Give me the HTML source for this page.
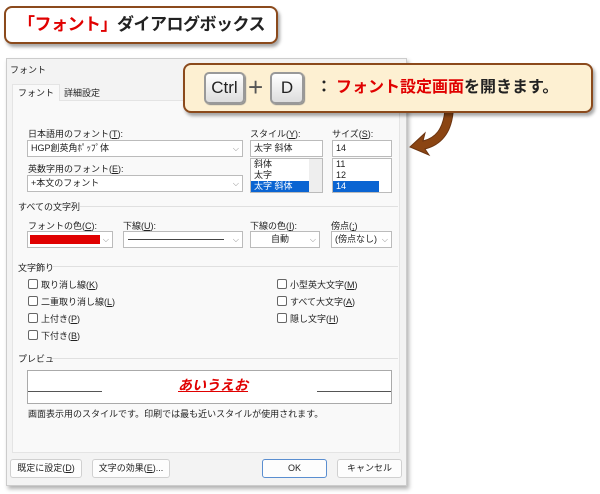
<!DOCTYPE html>
<html><head><meta charset="utf-8"><style>
*{box-sizing:border-box;margin:0;padding:0}
body{width:600px;height:494px;background:#fff;position:relative;overflow:hidden;font-family:"Liberation Sans","Noto Sans CJK JP",sans-serif;font-size:9px;color:#222}
.a{position:absolute;white-space:nowrap}
.title{left:4px;top:6px;width:274px;height:38px;border:2px solid #8b4a1c;border-radius:8px;background:#fff;box-shadow:2px 3px 3px rgba(0,0,0,.35);font-size:17px;font-weight:bold;line-height:34px;padding-left:12px;letter-spacing:-0.5px}
.dlg{left:6px;top:58px;width:401px;height:428px;background:#f3f3f3;border:1px solid #ccc;box-shadow:2px 3px 4px rgba(0,0,0,.3)}
.panel{left:12px;top:100px;width:388px;height:353px;background:#f9f9f9;border:1px solid #e4e4e4}
.box{position:absolute;background:#fff;border:1px solid #bbb;height:17px;line-height:15px;padding-left:3px;white-space:nowrap}
.dd{position:absolute;right:3px;top:0;color:#888;font-size:8px}
.sec{position:absolute;height:1px;background:#e0e0e0}
.cb{position:absolute;width:10px;height:10px;border:1px solid #666;border-radius:2px;background:#fff}
.btn{position:absolute;top:459px;height:19px;background:#fdfdfd;border:1px solid #d0d0d0;border-radius:3px;text-align:center;line-height:17px}
u{text-decoration:underline}
.key{position:absolute;top:72px;height:32px;border:2px solid #999;border-radius:5px;background:linear-gradient(#fff,#ddd);font-size:17px;text-align:center;line-height:28px;color:#222;box-shadow:1px 1px 1px #888}
</style></head><body>
<div class="a title"><span style="color:#e00000">「フォント」</span>ダイアログボックス</div>
<div class="a dlg"></div>
<div class="a" style="left:10px;top:63px">フォント</div>
<div class="a" style="left:12px;top:84px;width:48px;height:17px;background:#f9f9f9;border:1px solid #e4e4e4;border-bottom:none;text-align:center;line-height:17px;z-index:2">フォント</div>
<div class="a" style="left:64px;top:86px;line-height:15px">詳細設定</div>
<div class="a panel"></div>
<div class="a" style="left:28px;top:127px">日本語用のフォント(<u>T</u>):</div>
<div class="box" style="left:27px;top:140px;width:216px">HGP創英角ﾎﾟｯﾌﾟ体<span class="dd">⌵</span></div>
<div class="a" style="left:28px;top:162px">英数字用のフォント(<u>E</u>):</div>
<div class="box" style="left:27px;top:175px;width:216px">+本文のフォント<span class="dd">⌵</span></div>
<div class="a" style="left:250px;top:127px">スタイル(<u>Y</u>):</div>
<div class="box" style="left:250px;top:140px;width:73px">太字 斜体</div>
<div class="box" style="left:250px;top:158px;width:73px;height:35px;padding:0;line-height:11px"><div style="padding-left:3px">斜体</div><div style="padding-left:3px">太字</div><div style="background:#0a64d2;color:#fff;width:58px;padding-left:3px">太字 斜体</div><div class="a" style="left:58px;top:0;width:13px;height:33px;background:#eee"></div></div>
<div class="a" style="left:332px;top:127px">サイズ(<u>S</u>):</div>
<div class="box" style="left:332px;top:140px;width:60px">14</div>
<div class="box" style="left:332px;top:158px;width:60px;height:35px;padding:0;line-height:11px"><div style="padding-left:3px">11</div><div style="padding-left:3px">12</div><div style="background:#0a64d2;color:#fff;width:46px;padding-left:3px">14</div></div>
<div class="a" style="left:18px;top:200px">すべての文字列</div><div class="sec" style="left:80px;top:206px;width:318px"></div>
<div class="a" style="left:28px;top:219px">フォントの色(<u>C</u>):</div>
<div class="box" style="left:27px;top:231px;width:86px"><div class="a" style="left:2px;top:3px;width:70px;height:9px;background:#e00000"></div><span class="dd">⌵</span></div>
<div class="a" style="left:123px;top:219px">下線(<u>U</u>):</div>
<div class="box" style="left:123px;top:231px;width:120px"><div class="a" style="left:4px;top:7px;width:96px;height:1px;background:#444"></div><span class="dd">⌵</span></div>
<div class="a" style="left:250px;top:219px">下線の色(<u>I</u>):</div>
<div class="box" style="left:250px;top:231px;width:70px;padding-left:20px">自動<span class="dd">⌵</span></div>
<div class="a" style="left:331px;top:219px">傍点(<u>;</u>)</div>
<div class="box" style="left:331px;top:231px;width:61px">(傍点なし)<span class="dd">⌵</span></div>
<div class="a" style="left:18px;top:261px">文字飾り</div><div class="sec" style="left:52px;top:266px;width:346px"></div>
<div class="cb" style="left:28px;top:279px"></div><div class="a" style="left:41px;top:278px">取り消し線(<u>K</u>)</div>
<div class="cb" style="left:28px;top:296px"></div><div class="a" style="left:41px;top:295px">二重取り消し線(<u>L</u>)</div>
<div class="cb" style="left:28px;top:313px"></div><div class="a" style="left:41px;top:312px">上付き(<u>P</u>)</div>
<div class="cb" style="left:28px;top:330px"></div><div class="a" style="left:41px;top:329px">下付き(<u>B</u>)</div>
<div class="cb" style="left:277px;top:279px"></div><div class="a" style="left:290px;top:278px">小型英大文字(<u>M</u>)</div>
<div class="cb" style="left:277px;top:296px"></div><div class="a" style="left:290px;top:295px">すべて大文字(<u>A</u>)</div>
<div class="cb" style="left:277px;top:313px"></div><div class="a" style="left:290px;top:312px">隠し文字(<u>H</u>)</div>
<div class="a" style="left:18px;top:352px">プレビュー</div><div class="sec" style="left:52px;top:358px;width:346px"></div>
<div class="a" style="left:27px;top:370px;width:365px;height:34px;background:#fff;border:1px solid #aaa"></div>
<div class="a" style="left:28px;top:391px;width:74px;height:1px;background:#555"></div>
<div class="a" style="left:317px;top:391px;width:74px;height:1px;background:#555"></div>
<div class="a" style="left:178px;top:375px;font-size:14px;font-weight:bold;font-style:italic;color:#e00000;text-decoration:underline">あいうえお</div>
<div class="a" style="left:28px;top:407px">画面表示用のスタイルです。印刷では最も近いスタイルが使用されます。</div>
<div class="btn" style="left:10px;width:72px">既定に設定(<u>D</u>)</div>
<div class="btn" style="left:92px;width:78px">文字の効果(<u>E</u>)...</div>
<div class="btn" style="left:262px;width:65px;border:1px solid #5a8ed0">OK</div>
<div class="btn" style="left:337px;width:65px">キャンセル</div>
<svg class="a" style="left:405px;top:105px" width="50" height="55"><path d="M40 5 C38 25 30 33 18 36 L20 28 L5 42 L24 50 L20 44 C36 40 46 28 48 8 Z" fill="#8b4513" stroke="#6b3410" stroke-width="1"/></svg>
<div class="a" style="left:183px;top:63px;width:410px;height:50px;border:2px solid #8b4a1c;border-radius:8px;background:#fdf0d2;box-shadow:2px 3px 3px rgba(0,0,0,.35)"></div>
<div class="key" style="left:204px;width:41px">Ctrl</div>
<div class="a" style="left:248px;top:70px;font-size:26px;color:#555;line-height:34px">+</div>
<div class="key" style="left:270px;width:34px">D</div>
<div class="a" style="left:316px;top:77px;font-size:16px;font-weight:bold;line-height:22px">：</div>
<div class="a" style="left:336px;top:77px;font-size:16px;font-weight:bold;line-height:22px"><span style="color:#e00000">フォント設定画面</span>を開きます。</div>
</body></html>
